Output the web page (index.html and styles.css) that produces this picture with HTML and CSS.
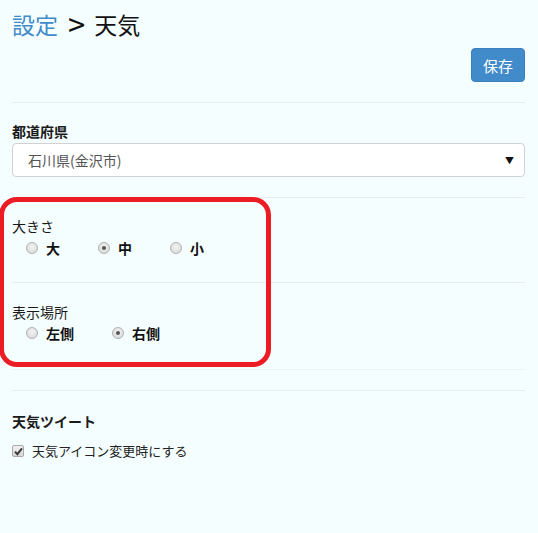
FILE: index.html
```html
<!DOCTYPE html>
<html>

<head>
    <title>設定 &gt; 天気</title>
    <link rel="stylesheet" href="styles.css">
</head>

<body>

    <div class="page">
        <!-- Header -->
        <h1 class="title"><a href="#" class="crumb">設定</a><span class="gt">&gt;</span>天気</h1>

        <div class="toolbar">
            <button class="btn-save">保存</button>
        </div>

        <hr class="sep sep-top">

        <!-- Prefecture -->
        <div class="group">
            <div class="field-label bold">都道府県</div>
            <div class="select">
                <span class="select-text">石川県(金沢市)</span>
                <span class="caret">▼</span>
            </div>
        </div>

        <hr class="sep sep-select">

        <!-- Size -->
        <div class="group">
            <div class="field-label">大きさ</div>
            <div class="radios">
                <label class="radio"><span class="dot"></span>大</label>
                <label class="radio"><span class="dot checked"></span>中</label>
                <label class="radio"><span class="dot"></span>小</label>
            </div>
        </div>

        <hr class="sep sep-mid">

        <!-- Position -->
        <div class="group group-pos">
            <div class="field-label">表示場所</div>
            <div class="radios">
                <label class="radio"><span class="dot"></span>左側</label>
                <label class="radio"><span class="dot checked"></span>右側</label>
            </div>
        </div>

        <hr class="sep sep-light">
        <hr class="sep sep-double">

        <!-- Tweet -->
        <div class="group group-tweet">
            <div class="field-label bold">天気ツイート</div>
            <label class="check">
                <span class="box">
                    <svg width="9" height="9" viewBox="0 0 9 9">
                        <path d="M1 4.6 L3.4 7.2 L8 1.4" fill="none" stroke="#3a3a3a" stroke-width="2"/>
                    </svg>
                </span>
                天気アイコン変更時にする
            </label>
        </div>
    </div>

    <!-- Red annotation frame drawn over the settings -->
    <div class="annotation"></div>

</body>

</html>
```

FILE: styles.css
```css
body {
    margin: 0;
    background-color: #f5feff;
    font-family: "Noto Sans CJK JP", "Noto Sans", sans-serif;
    color: #222;
    font-size: 14px;
}

.page {
    padding: 0 13px 0 12px;
}

.title {
    margin: 11px 0 0;
    font-size: 23px;
    line-height: 26px;
    font-weight: normal;
    color: #111;
}

.crumb {
    color: #428bca;
    text-decoration: none;
}

.gt {
    display: inline-block;
    margin: 0 9px 0 10px;
    font-size: 31px;
    vertical-align: top;
}

.toolbar {
    display: flex;
    justify-content: flex-end;
    margin-top: 11px;
}

.btn-save {
    height: 34px;
    padding: 0 11px;
    background-color: #428bca;
    border: 1px solid #3b80bd;
    border-radius: 4px;
    color: #fff;
    font-family: inherit;
    font-size: 15px;
}

.sep {
    border: 0;
    border-top: 1px solid #e8eced;
    margin: 0;
}

.sep-top {
    margin-top: 20px;
}

.sep-select {
    margin-top: 20px;
}

.sep-mid {
    margin-top: 24px;
}

.sep-light {
    margin-top: 26px;
    border-top-color: #eef1f2;
}

.sep-double {
    margin-top: 20px;
}

.group {
    padding-top: 18px;
}

.group-pos {
    padding-top: 19px;
}

.group-tweet {
    padding-top: 20px;
}

.field-label {
    line-height: 20px;
    color: #1a1a1a;
}

.field-label.bold {
    font-weight: bold;
}

.select {
    display: flex;
    align-items: center;
    justify-content: space-between;
    margin-top: 2px;
    height: 32px;
    padding: 0 10px 0 15px;
    background: #fff;
    border: 1px solid #cfd1d2;
    border-radius: 4px;
    color: #555;
}

.caret {
    font-size: 9px;
    color: #111;
}

.radios {
    display: flex;
    gap: 38px;
    padding-left: 14px;
    margin-top: 2px;
    line-height: 20px;
}

.group-pos .radios {
    margin-top: 1px;
}

.radio {
    display: flex;
    align-items: center;
    gap: 8px;
    font-weight: bold;
    color: #111;
}

.dot {
    width: 10px;
    height: 10px;
    border-radius: 50%;
    border: 1px solid #b0b0b0;
    background: radial-gradient(circle at 50% 40%, #f4f4f4, #d4d4d4);
    display: flex;
    align-items: center;
    justify-content: center;
}

.dot.checked::after {
    content: "";
    width: 4px;
    height: 4px;
    border-radius: 50%;
    background: #555;
}

.check {
    display: flex;
    align-items: center;
    gap: 8px;
    margin-top: 10px;
    line-height: 20px;
    font-size: 13px;
    color: #222;
}

.box {
    width: 10px;
    height: 10px;
    border: 1px solid #a9a9a9;
    border-radius: 2px;
    background: linear-gradient(#f2f2f2, #d6d6d6);
    display: flex;
    align-items: center;
    justify-content: center;
}

.annotation {
    position: absolute;
    left: -1px;
    top: 197px;
    width: 262px;
    height: 160px;
    border: 5px solid #ec1c24;
    border-radius: 18px;
}
```
